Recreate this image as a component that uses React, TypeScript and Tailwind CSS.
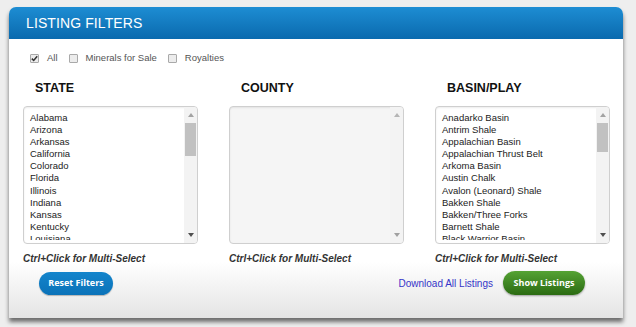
const states = [
  "Alabama",
  "Arizona",
  "Arkansas",
  "California",
  "Colorado",
  "Florida",
  "Illinois",
  "Indiana",
  "Kansas",
  "Kentucky",
  "Louisiana",
];

const basins = [
  "Anadarko Basin",
  "Antrim Shale",
  "Appalachian Basin",
  "Appalachian Thrust Belt",
  "Arkoma Basin",
  "Austin Chalk",
  "Avalon (Leonard) Shale",
  "Bakken Shale",
  "Bakken/Three Forks",
  "Barnett Shale",
  "Black Warrior Basin",
];

function Checkbox({ label, checked }: { label: string; checked?: boolean }) {
  return (
    <label className="flex items-center gap-[8px] mr-[11px]">
      <span className="w-[9px] h-[9px] border border-[#a9a9a9] bg-[#ececec] rounded-[1px] flex items-center justify-center">
        {checked && (
          <svg width="7" height="7" viewBox="0 0 7 7">
            <path d="M0.8 3.6 L2.7 5.5 L6.2 1.2" stroke="#333" strokeWidth="1.5" fill="none" />
          </svg>
        )}
      </span>
      <span>{label}</span>
    </label>
  );
}

function ListBox({ items, thumbH, disabled }: { items: string[]; thumbH: number; disabled?: boolean }) {
  return (
    <div
      className={`h-[138px] border border-[#cfcfcf] rounded-[4px] flex overflow-hidden shadow-[inset_0_1px_2px_rgba(0,0,0,0.08)] ${
        disabled ? "bg-[#f5f5f5]" : "bg-white"
      }`}
    >
      <ul className="flex-1 h-[133px] pl-[6px] pt-[5px] text-[9.5px] leading-[12.1px] text-[#222] overflow-hidden">
        {items.map((item) => (
          <li key={item} className="whitespace-nowrap">
            {item}
          </li>
        ))}
      </ul>
      <div className="w-[13px] bg-[#f3f3f3] flex flex-col items-center">
        <div className="h-[16px] flex items-center justify-center">
          <svg width="6" height="4" viewBox="0 0 6 4">
            <path d="M3 0 L6 4 L0 4 Z" fill={disabled ? "#b5b5b5" : "#a3a3a3"} />
          </svg>
        </div>
        {!disabled && <div className="w-[11px] bg-[#c1c1c1]" style={{ height: thumbH }} />}
        <div className="mt-auto h-[16px] flex items-center justify-center">
          <svg width="6" height="4" viewBox="0 0 6 4">
            <path d="M0 0 L6 0 L3 4 Z" fill={disabled ? "#a0a0a0" : "#505050"} />
          </svg>
        </div>
      </div>
    </div>
  );
}

function Column({ title, children }: { title: string; children: React.ReactNode }) {
  return (
    <div className="flex flex-col">
      <h3 className="pl-[12px] text-[12.5px] leading-[14px] font-bold text-[#111]">{title}</h3>
      <div className="mt-[11px]">{children}</div>
      <p className="mt-[9px] text-[10px] leading-[12px] font-bold italic text-[#333]">
        Ctrl+Click for Multi-Select
      </p>
    </div>
  );
}

export default function App() {
  return (
    <div className="w-[636px] h-[327px] bg-[#eeeeee] pt-[7px] pl-[9px] overflow-hidden font-['Liberation_Sans',Arial,sans-serif]">
      <div className="w-[614px] rounded-t-[7px] shadow-[0_4px_4px_rgba(0,0,0,0.55)]">
        <div className="h-[32px] rounded-t-[7px] bg-gradient-to-b from-[#1d8dd3] to-[#0a6aae] flex items-center pl-[17px]">
          <h2 className="text-[14px] text-white tracking-[0.1px]">LISTING FILTERS</h2>
        </div>

        <div className="bg-gradient-to-b from-white from-[80%] to-[#e4e4e4] pt-[13px] px-[14px] pb-[23px]">
          <div className="h-[12px] flex items-center pl-[7px] text-[9.5px] text-[#555]">
            <Checkbox label="All" checked />
            <Checkbox label="Minerals for Sale" />
            <Checkbox label="Royalties" />
          </div>

          <div className="mt-[17px] grid grid-cols-[175px_175px_175px] gap-x-[31px]">
            <Column title="STATE">
              <ListBox items={states} thumbH={33} />
            </Column>
            <Column title="COUNTY">
              <ListBox items={[]} thumbH={0} disabled />
            </Column>
            <Column title="BASIN/PLAY">
              <ListBox items={basins} thumbH={29} />
            </Column>
          </div>

          <div className="mt-[6px] flex items-center">
            <button className="ml-[16px] w-[74px] h-[23px] rounded-full bg-gradient-to-b from-[#1485cc] to-[#0a72b8] text-white text-[9px] font-bold font-['Open_Sans',sans-serif] shadow-[0_1px_1px_rgba(0,0,0,0.25)]">
              Reset Filters
            </button>
            <div className="ml-auto mr-[24px] flex items-center gap-[10px]">
              <a className="text-[10px] text-[#3434c8]">Download All Listings</a>
              <button className="w-[82px] h-[24px] rounded-full bg-gradient-to-b from-[#55a334] to-[#2b6b12] text-white text-[9px] font-bold font-['Open_Sans',sans-serif] shadow-[0_1px_2px_rgba(0,0,0,0.35)]">
                Show Listings
              </button>
            </div>
          </div>
        </div>
      </div>
    </div>
  );
}
